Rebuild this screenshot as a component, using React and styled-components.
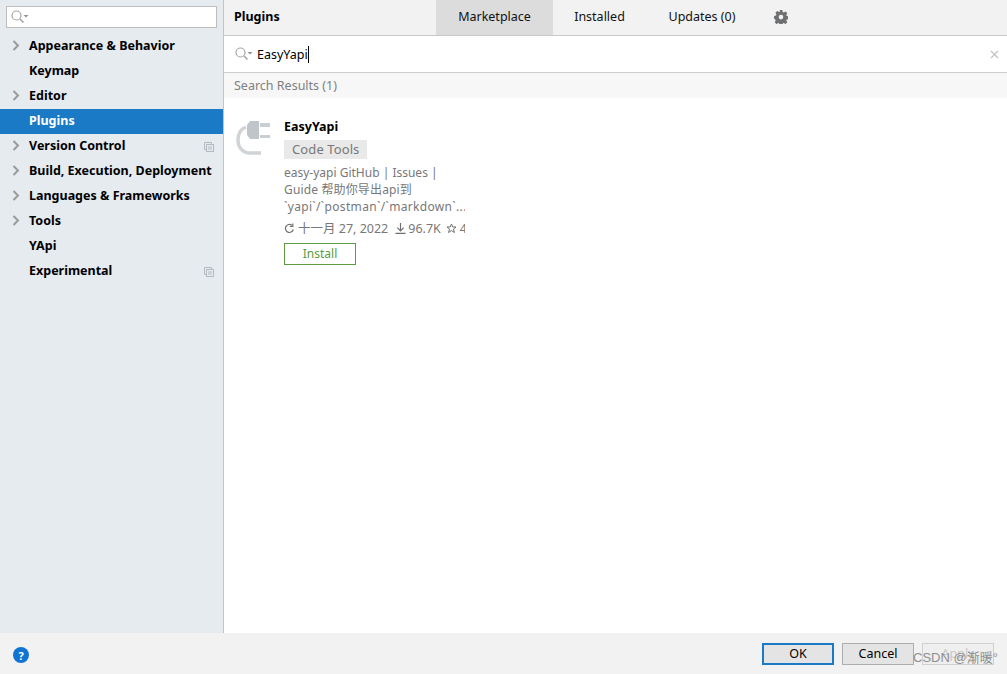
import React from "react";
import styled, { createGlobalStyle } from "styled-components";

const Global = createGlobalStyle`
  *, *::before, *::after { box-sizing: border-box; }
  html, body { margin: 0; padding: 0; height: 100%; background: #f2f2f2; }
  #root { height: 100%; }
  body { font-family: "Noto Sans", "Noto Sans CJK SC", sans-serif; font-size: 13px; overflow: hidden; }
`;

const Page = styled.div`
  width: 1007px; height: 674px; display: flex; flex-direction: column; position: relative; overflow: hidden;
`;
const Body = styled.div`display: flex; height: 633px; flex: none;`;
const Sidebar = styled.aside`
  width: 224px; flex: none; background: #e6ebf0; border-right: 1px solid #c4c4c4; padding-top: 6px;
`;
const SideSearch = styled.div`
  margin: 0 6px 6px; width: 211px; height: 22px; background: #fff; border: 1px solid #bdbdbd;
  display: flex; align-items: center; padding-left: 3px;
`;
const Row = styled.div`
  height: 25px; display: flex; align-items: center; padding-left: 12px; padding-right: 9px;
  background: ${p => (p.$active ? "#1a7ac5" : "transparent")};
  color: ${p => (p.$active ? "#fff" : "#000")};
`;
const ArrowSlot = styled.span`width: 17px; flex: none; display: flex; align-items: center; padding-bottom: 2px;`;
const RowLabel = styled.span`font-weight: 700; font-size: 12.5px; flex: 1; white-space: nowrap; padding-bottom: 2px;`;

const Main = styled.main`flex: 1; background: #fff; display: flex; flex-direction: column; min-width: 0;`;
const Header = styled.header`
  height: 36px; background: #f2f2f2; border-bottom: 1px solid #c9c9c9; display: flex; align-items: stretch; flex: none;
`;
const Title = styled.div`
  width: 212px; padding: 0 0 2px 10px; font-weight: 700; font-size: 12.5px; display: flex; align-items: center; color: #000;
`;
const Tab = styled.div`
  display: flex; align-items: center; justify-content: center; width: ${p => p.$w}px; font-size: 12.5px; color: #111; padding-bottom: 2px;
  background: ${p => (p.$active ? "#dcdcdc" : "transparent")};
`;
const GearSlot = styled.div`display: flex; align-items: center; margin-left: 16px; padding-bottom: 1px;`;
const SearchBar = styled.div`
  height: 37px; flex: none; border-bottom: 1px solid #cdcdcd; display: flex; align-items: center; padding: 0 8px 0 10px;
`;
const SearchText = styled.span`font-size: 12.5px; color: #000; margin-left: 4px; border-right: 1px solid #000; line-height: 17px;`;
const Spacer = styled.div`flex: 1;`;
const ResultsHeader = styled.div`
  height: 25px; flex: none; background: #f7f7f7; color: #808080; font-size: 12.5px; display: flex; align-items: center; padding-left: 10px;
`;
const Card = styled.div`display: flex; padding: 20px 0 0 11px; width: 241px; overflow: hidden;`;
const PluginIcon = styled.div`width: 49px; flex: none; padding-top: 1px;`;
const Info = styled.div`display: flex; flex-direction: column; align-items: flex-start; min-width: 0; width: 181px; overflow: hidden;`;
const Name = styled.div`font-weight: 700; font-size: 12.5px; color: #000; line-height: 17px;`;
const Tag = styled.div`
  margin-top: 5px; background: #e9e9e9; color: #787878; font-size: 13px; letter-spacing: 0.1px; height: 19px; line-height: 19px; padding: 0 8px;
`;
const Desc = styled.div`margin-top: 5px; color: #787878; font-size: 12px; line-height: 17px; white-space: nowrap;`;
const DescLine = styled.div`letter-spacing: ${p => p.$spacing || 0}px;`;
const Meta = styled.div`
  margin-top: 5px; display: flex; align-items: center; color: #787878; font-size: 12.5px; line-height: 17px; white-space: nowrap; height: 17px;
`;
const MetaItem = styled.span`display: inline-flex; align-items: center; gap: ${p => p.$inner || 3}px; margin-right: ${p => p.$gap || 0}px;`;
const InstallButton = styled.div`
  margin-top: 6px; width: 72px; height: 22px; border: 1px solid #5c9a3c; color: #5c9a3c; font-size: 12px;
  display: flex; align-items: center; justify-content: center; background: #fff; padding-bottom: 1px;
`;
const Footer = styled.footer`
  height: 41px; background: #f2f2f2; display: flex; align-items: flex-start; padding: 10px 13px 0 13px; flex: none;
`;
const Help = styled.div`
  width: 16px; height: 16px; margin-top: 4px; border-radius: 50%; background: #0f74d2; color: #fff; font-size: 11px; font-weight: 700;
  display: flex; align-items: center; justify-content: center;
`;
const Buttons = styled.div`display: flex; gap: 8px; margin-left: auto;`;
const Btn = styled.div`
  width: 72px; height: 22px; display: flex; align-items: center; justify-content: center; font-size: 12.5px; padding-bottom: 2px;
  background: ${p => (p.$disabled ? "#efefef" : "#e4e4e4")};
  color: ${p => (p.$disabled ? "#c8c8c8" : "#000")};
  border: ${p => (p.$primary ? "2px solid #1a7ac5" : p.$disabled ? "1px solid #d0d0d0" : "1px solid #adadad")};
`;
const Watermark = styled.div`
  position: absolute; left: 913px; top: 649px; font-size: 13px; color: #8f8f8f; line-height: 18px; white-space: nowrap;
  font-family: "Liberation Sans", "Noto Sans CJK SC", sans-serif;
`;

const SearchIcon = () => (
  <svg width="19" height="16" viewBox="0 0 19 16" fill="none">
    <circle cx="6.5" cy="6.5" r="4.5" stroke="#a3a6a8" strokeWidth="1.2" />
    <path d="M10 10l3.5 3.5" stroke="#a3a6a8" strokeWidth="1.6" />
    <path d="M13.5 6h5l-2.5 2.6z" fill="#8f9397" />
  </svg>
);
const Chevron = () => (
  <svg width="8" height="11" viewBox="0 0 8 11" fill="none">
    <path d="M1.5 1l4.500 4.500L1.500 10" stroke="#9a9a9a" strokeWidth="2" />
  </svg>
);
const CopyIcon = () => (
  <svg width="10" height="10" viewBox="0 0 10 10" fill="none" stroke="#b4bac0" strokeWidth="1">
    <path d="M2.500 7.500H.5V.5h7v2" />
    <rect x="2.500" y="2.500" width="7" height="7" />
    <path d="M4 5h4M4 7h4" />
  </svg>
);
const Gear = () => (
  <svg width="14" height="14" viewBox="0 0 14 14">
    <path
      fillRule="evenodd"
      fill="#6f7072"
      d="M5.700 0h2.600l.4 1.900 1.100.5 1.700-1 1.800 1.900-1 1.600.5 1.200 1.900.4v2.600l-1.900.4-.5 1.100 1 1.700-1.800 1.800-1.700-1-1.100.5-.4 1.900H5.700l-.4-1.900-1.100-.5-1.700 1-1.800-1.800 1-1.700-.5-1.100L0 8.600V6l1.900-.4.5-1.200-1-1.600 1.800-1.900 1.700 1 1.100-.5zM7 4.800a2.300 2.300 0 1 0 0 4.600 2.300 2.300 0 0 0 0-4.600z"
    />
  </svg>
);
const Plug = () => (
  <svg width="38" height="38" viewBox="0 0 38 38" fill="none">
    <path d="M11 8C6 10 3 14.500 3 21c0 7.500 5 13 12 13h11" stroke="#d0d4d7" strokeWidth="3.500" />
    <path d="M15 2h9v18h-9l-3-4V6z" fill="#c0c5ca" />
    <path d="M25 4h10v4H25zM25 16h10v3H25z" fill="#c9ced2" />
  </svg>
);
const Refresh = () => (
  <svg width="11" height="11" viewBox="0 0 11 11" fill="none" stroke="#6f6f6f" strokeWidth="1.2">
    <path d="M9.300 6.500A4 4 0 1 1 8 2.400" />
    <path d="M8.800.5v3h-3" />
  </svg>
);
const Download = () => (
  <svg width="11" height="11" viewBox="0 0 11 11" fill="none" stroke="#6f6f6f" strokeWidth="1.2">
    <path d="M5.500 0v7.500M2.300 4.600l3.200 3.200 3.200-3.200M.5 10.300h10" />
  </svg>
);
const Star = () => (
  <svg width="11" height="11" viewBox="0 0 11 11" fill="none" stroke="#6f6f6f" strokeWidth="1">
    <path d="M5.500 1l1.300 3h3.200L7.500 6.100l.9 3.400-2.900-1.900-2.900 1.900.9-3.400L1 4h3.200z" />
  </svg>
);
const Close = () => (
  <svg width="9" height="9" viewBox="0 0 9 9" stroke="#c4c4c4" strokeWidth="1.400">
    <path d="M1 1l7 7M8 1l-7 7" />
  </svg>
);

const items = [
  { label: "Appearance & Behavior", arrow: true },
  { label: "Keymap" },
  { label: "Editor", arrow: true },
  { label: "Plugins", active: true },
  { label: "Version Control", arrow: true, copy: true },
  { label: "Build, Execution, Deployment", arrow: true },
  { label: "Languages & Frameworks", arrow: true },
  { label: "Tools", arrow: true },
  { label: "YApi" },
  { label: "Experimental", copy: true },
];

export default function App() {
  return (
    <Page>
      <Global />
      <Body>
        <Sidebar>
          <SideSearch><SearchIcon /></SideSearch>
          {items.map(it => (
            <Row key={it.label} $active={it.active}>
              <ArrowSlot>{it.arrow && <Chevron />}</ArrowSlot>
              <RowLabel>{it.label}</RowLabel>
              {it.copy && <CopyIcon />}
            </Row>
          ))}
        </Sidebar>
        <Main>
          <Header>
            <Title>Plugins</Title>
            <Tab $active $w={117}>Marketplace</Tab>
            <Tab $w={93}>Installed</Tab>
            <Tab $w={112}>Updates (0)</Tab>
            <GearSlot><Gear /></GearSlot>
          </Header>
          <SearchBar>
            <SearchIcon />
            <SearchText>EasyYapi</SearchText>
            <Spacer />
            <Close />
          </SearchBar>
          <ResultsHeader>Search Results (1)</ResultsHeader>
          <Card>
            <PluginIcon><Plug /></PluginIcon>
            <Info>
              <Name>EasyYapi</Name>
              <Tag>Code Tools</Tag>
              <Desc>
                <DescLine>easy-yapi GitHub | Issues |</DescLine>
                <DescLine $spacing={0.15}>Guide 帮助你导出api到</DescLine>
                <DescLine $spacing={0.33}>`yapi`/`postman`/`markdown`...</DescLine>
              </Desc>
              <Meta>
                <MetaItem $gap={7}><Refresh />十一月 27, 2022</MetaItem>
                <MetaItem $gap={5} $inner={2}><Download />96.7K</MetaItem>
                <MetaItem><Star />4</MetaItem>
              </Meta>
              <InstallButton>Install</InstallButton>
            </Info>
          </Card>
        </Main>
      </Body>
      <Footer>
        <Help>?</Help>
        <Buttons>
          <Btn $primary>OK</Btn>
          <Btn>Cancel</Btn>
          <Btn $disabled>Apply</Btn>
        </Buttons>
      </Footer>
      <Watermark>CSDN @渐暖°</Watermark>
    </Page>
  );
}
